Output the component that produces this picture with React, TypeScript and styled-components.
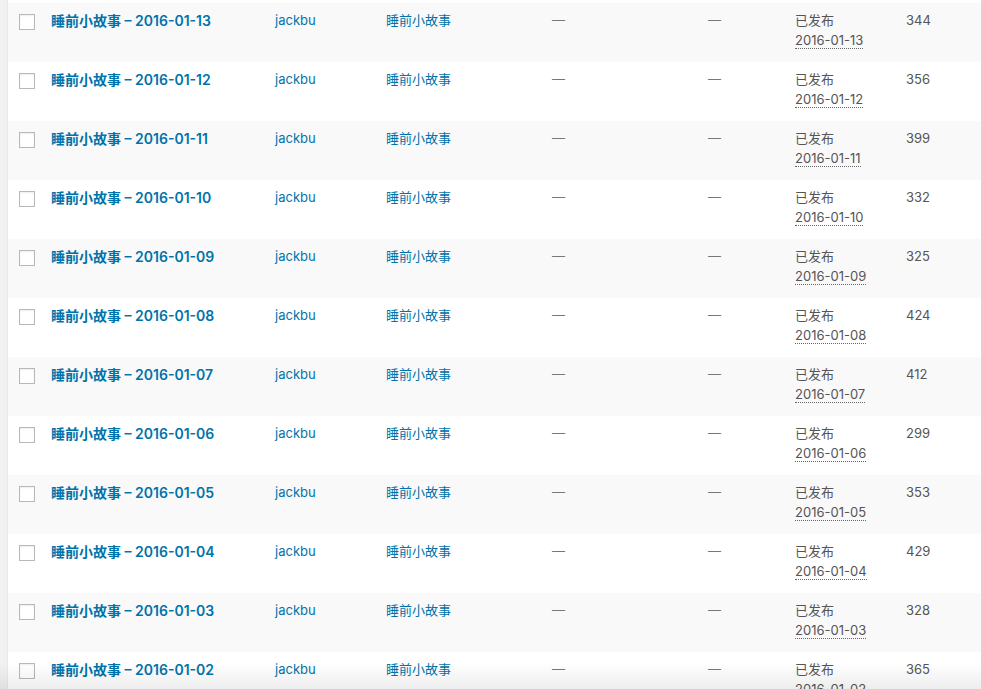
import React from "react";
import styled, { createGlobalStyle } from "styled-components";

const GlobalStyle = createGlobalStyle`
  html, body {
    margin: 0;
    padding: 0;
    background: #f1f1f1;
    overflow: hidden;
  }
  body {
    font-family: Inter, "Noto Sans CJK SC", sans-serif;
    -webkit-font-smoothing: antialiased;
  }
`;

const Page = styled.div`
  display: flex;
  height: 689px;
  overflow: hidden;
  padding-left: 7px;
  position: relative;
`;

const Table = styled.div`
  flex: 1;
  display: flex;
  flex-direction: column;
  background: #fff;
  border-left: 1px solid #e8e8e8;
`;

const TopFill = styled.div`
  height: 3px;
  background: #fff;
  flex-shrink: 0;
`;

const Row = styled.div<{ $alt: boolean }>`
  display: grid;
  grid-template-columns: 33px 224px 111px 166px 156px 87px 111px 1fr;
  height: 59px;
  flex-shrink: 0;
  background: ${(p) => (p.$alt ? "#f9f9f9" : "#fff")};
`;

const Cell = styled.div`
  padding: 8px 10px;
  font-size: 13px;
  line-height: 19.5px;
  color: #555;
  box-sizing: border-box;
  min-width: 0;
  white-space: nowrap;
`;

const CheckCell = styled.div`
  padding: 11px 0 0 11px;
`;

const Check = styled.span`
  display: block;
  width: 16px;
  height: 16px;
  box-sizing: border-box;
  border: 1px solid #b4b9be;
  background: #fff;
  box-shadow: inset 0 1px 2px rgba(0, 0, 0, 0.07);
`;

const TitleLink = styled.a`
  font-size: 14px;
  font-weight: 600;
  line-height: 19.6px;
  color: #0073aa;
  text-decoration: none;
`;

const Link = styled.a`
  color: #0073aa;
  text-decoration: none;
`;

const Dash = styled.span`
  color: #777;
`;

const DateAbbr = styled.abbr`
  text-decoration: none;
  border-bottom: 1px dotted #666;
  color: #555;
`;

const BottomShade = styled.div`
  position: absolute;
  left: 0;
  right: 0;
  bottom: 0;
  height: 26px;
  pointer-events: none;
  background: linear-gradient(to bottom, rgba(0, 0, 0, 0), rgba(0, 0, 0, 0.07));
`;

const posts = [
  { d: "13", v: 344 },
  { d: "12", v: 356 },
  { d: "11", v: 399 },
  { d: "10", v: 332 },
  { d: "09", v: 325 },
  { d: "08", v: 424 },
  { d: "07", v: 412 },
  { d: "06", v: 299 },
  { d: "05", v: 353 },
  { d: "04", v: 429 },
  { d: "03", v: 328 },
  { d: "02", v: 365 },
];

export default function App() {
  return (
    <>
      <GlobalStyle />
      <Page>
        <Table>
          <TopFill />
          {posts.map((p, i) => {
            const date = `2016-01-${p.d}`;
            return (
              <Row key={p.d} $alt={i % 2 === 0}>
                <CheckCell>
                  <Check />
                </CheckCell>
                <Cell>
                  <TitleLink href="#">睡前小故事 – {date}</TitleLink>
                </Cell>
                <Cell>
                  <Link href="#">jackbu</Link>
                </Cell>
                <Cell>
                  <Link href="#">睡前小故事</Link>
                </Cell>
                <Cell>
                  <Dash>—</Dash>
                </Cell>
                <Cell>
                  <Dash>—</Dash>
                </Cell>
                <Cell>
                  已发布
                  <br />
                  <DateAbbr title={date}>{date}</DateAbbr>
                </Cell>
                <Cell>{p.v}</Cell>
              </Row>
            );
          })}
        </Table>
        <BottomShade />
      </Page>
    </>
  );
}
